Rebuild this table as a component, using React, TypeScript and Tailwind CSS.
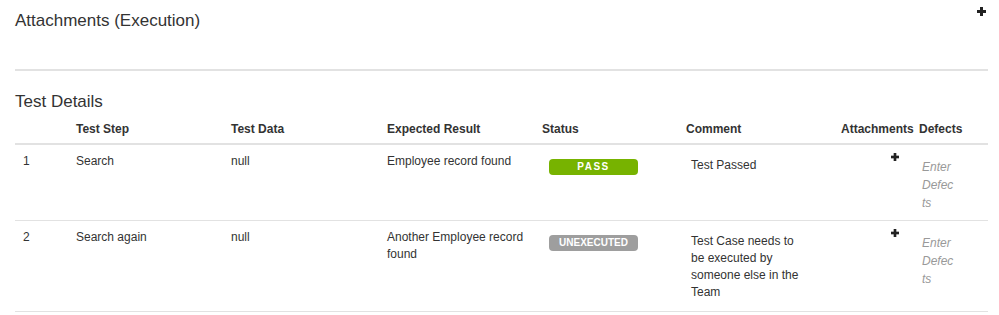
import React from "react";

type Step = {
  no: number;
  step: string;
  data: string;
  expected: string;
  status: "PASS" | "UNEXECUTED";
  comment: string;
};

const steps: Step[] = [
  { no: 1, step: "Search", data: "null", expected: "Employee record found", status: "PASS", comment: "Test Passed" },
  {
    no: 2,
    step: "Search again",
    data: "null",
    expected: "Another Employee record found",
    status: "UNEXECUTED",
    comment: "Test Case needs to be executed by someone else in the Team",
  },
];

const PlusIcon = ({ size }: { size: number }) => (
  <svg width={size} height={size} viewBox="0 0 9 9" className="block" fill="#222">
    <rect x="3" y="0" width="3" height="9" />
    <rect x="0" y="3" width="9" height="3" />
  </svg>
);

const StatusBadge = ({ status }: { status: Step["status"] }) =>
  status === "PASS" ? (
    <div className="ml-[7px] mt-[6px] flex h-[16px] w-[89px] items-center justify-center rounded-[4px] bg-[#77b300] text-[10px] font-bold leading-none tracking-[1.5px] text-white">
      PASS
    </div>
  ) : (
    <div className="ml-[7px] mt-[6px] flex h-[16px] w-[89px] items-center justify-center rounded-[4px] bg-[#9e9e9e] text-[10px] font-bold leading-none text-white">
      UNEXECUTED
    </div>
  );

const headers = ["", "Test Step", "Test Data", "Expected Result", "Status", "Comment", "Attachments", "Defects"];

export default function App() {
  return (
    <div className="min-h-screen bg-white pl-[15px] pr-[11px] pt-[7px] font-['Liberation_Sans',Arial,sans-serif] text-[#333]">
      {/* Attachments panel */}
      <div className="flex items-start justify-between">
        <h2 className="mt-[4px] text-[17px] font-normal leading-[20px]">Attachments (Execution)</h2>
        <div className="mr-[2px]">
          <PlusIcon size={9} />
        </div>
      </div>
      <div className="mt-[38px] border-b-2 border-[#e2e2e2]" />

      {/* Test details table */}
      <h2 className="mt-[21px] text-[17px] font-normal leading-[20px]">Test Details</h2>
      <table className="w-full table-fixed border-separate border-spacing-0 text-[12px] leading-[17px]">
        <colgroup>
          <col className="w-[53px]" />
          <col className="w-[155px]" />
          <col className="w-[156px]" />
          <col className="w-[155px]" />
          <col className="w-[144px]" />
          <col className="w-[155px]" />
          <col className="w-[78px]" />
          <col />
        </colgroup>
        <thead>
          <tr>
            {headers.map((h, i) => (
              <th
                key={i}
                className="whitespace-nowrap border-b-2 border-[#e2e2e2] pb-[5px] pl-[8px] pt-[9px] text-left font-bold"
              >
                {h}
              </th>
            ))}
          </tr>
        </thead>
        <tbody>
          {steps.map((s) => (
            <tr key={s.no} className="align-top">
              <td className="border-b border-[#e2e2e2] pb-[8px] pl-[8px] pt-[8px]">{s.no}</td>
              <td className="border-b border-[#e2e2e2] pb-[8px] pl-[8px] pt-[8px]">{s.step}</td>
              <td className="border-b border-[#e2e2e2] pb-[8px] pl-[8px] pt-[8px]">{s.data}</td>
              <td className="border-b border-[#e2e2e2] pb-[8px] pl-[8px] pr-[8px] pt-[8px]">{s.expected}</td>
              <td className="border-b border-[#e2e2e2] pb-[8px] pl-[8px] pt-[8px]">
                <StatusBadge status={s.status} />
              </td>
              <td className="border-b border-[#e2e2e2] pb-[8px] pl-[8px] pt-[8px]">
                <div className="mb-[2px] ml-[5px] mt-[4px] w-[110px]">{s.comment}</div>
              </td>
              <td className="border-b border-[#e2e2e2] pb-[8px] pl-[8px] pt-[8px]">
                <div className="ml-[50px]">
                  <PlusIcon size={8} />
                </div>
              </td>
              <td className="border-b border-[#e2e2e2] pb-[8px] pl-[8px] pt-[8px]">
                <div className="ml-[3px] mt-[5px] w-[34px] break-all italic leading-[18px] text-[#999]">Enter Defects</div>
              </td>
            </tr>
          ))}
        </tbody>
      </table>
    </div>
  );
}
